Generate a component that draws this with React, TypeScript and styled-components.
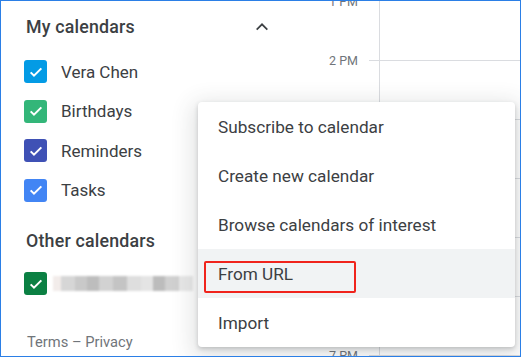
import styled, { createGlobalStyle } from "styled-components"

const GlobalStyle = createGlobalStyle`
  html, body {
    margin: 0;
    padding: 0;
    background: #ffffff;
  }
  body {
    font-family: Roboto, "Liberation Sans", Arial, sans-serif;
  }
`

const Frame = styled.div`
  position: relative;
  width: 521px;
  height: 357px;
  box-sizing: border-box;
  border: 1px solid #2b7fe6;
  display: flex;
  overflow: hidden;
  background: #fff;
`

const Sidebar = styled.div`
  width: 284px;
  flex-shrink: 0;
  display: flex;
  flex-direction: column;
`

const SectionHeader = styled.div<{ $gapTop?: number; $height: number }>`
  height: ${(p) => p.$height}px;
  margin-top: ${(p) => p.$gapTop ?? 0}px;
  display: flex;
  align-items: center;
  justify-content: space-between;
  padding: 0 15px 0 25px;
  font-size: 17.8px;
  font-weight: 500;
  letter-spacing: 0.2px;
  color: #3c4043;
`

const Row = styled.div`
  height: 39.5px;
  display: flex;
  align-items: center;
  padding-left: 23px;
  gap: 14px;
  font-size: 17px;
  color: #3c4043;
`

const Box = styled.div<{ $color: string }>`
  width: 23px;
  height: 23px;
  border-radius: 3px;
  background: ${(p) => p.$color};
  display: flex;
  align-items: center;
  justify-content: center;
  flex-shrink: 0;
`

const OtherRow = styled(Row)`
  margin-top: 6px;
  gap: 6px;
`

const Blurred = styled.div`
  display: flex;
  align-items: center;
  height: 16px;
  filter: blur(1.2px);
`

const BlurPiece = styled.span<{ $w: number; $c: string }>`
  width: ${(p) => p.$w}px;
  height: 15px;
  background: ${(p) => p.$c};
`

const Footer = styled.div`
  margin-top: 30px;
  padding-left: 26px;
  font-size: 14.7px;
  line-height: 16px;
  color: #70757a;
`

const TimeCol = styled.div`
  width: 84px;
  flex-shrink: 0;
  display: flex;
  flex-direction: column;
  margin-top: -29.5px;
`

const TimeLabel = styled.div`
  height: 59px;
  flex-shrink: 0;
  display: flex;
  align-items: center;
  justify-content: flex-end;
  padding-right: 11px;
  font-size: 12.5px;
  color: #70757a;
`

const Tick = styled.div`
  width: 10px;
  flex-shrink: 0;
  display: flex;
  flex-direction: column;
`

const Day = styled.div`
  flex: 1;
  border-left: 1px solid #dadce0;
  display: flex;
  flex-direction: column;
`

const HourCell = styled.div<{ $first?: boolean }>`
  height: 59px;
  flex-shrink: 0;
  box-sizing: border-box;
  border-top: 1px solid ${(p) => (p.$first ? "transparent" : "#dadce0")};
`

const Menu = styled.div`
  position: absolute;
  left: 197px;
  top: 101px;
  width: 317px;
  background: #fff;
  border-radius: 4px;
  box-shadow: 0 2px 4px rgba(60, 64, 67, 0.25), 0 6px 22px 6px rgba(60, 64, 67, 0.14);
  display: flex;
  flex-direction: column;
`

const MenuItem = styled.div<{ $active?: boolean }>`
  position: relative;
  height: 49px;
  display: flex;
  align-items: center;
  padding-left: 20px;
  font-size: 17.2px;
  color: #3c4043;
  background: ${(p) => (p.$active ? "#f1f3f4" : "transparent")};
`

const Highlight = styled.span`
  position: absolute;
  left: 6px;
  top: 12px;
  width: 152px;
  height: 32px;
  box-sizing: border-box;
  border: 2.5px solid #f0241c;
  border-radius: 2px;
`

const Check = () => (
  <svg width="16" height="16" viewBox="0 0 24 24">
    <path d="M4 12.5l5 5L20 6.5" fill="none" stroke="#fff" strokeWidth="3" />
  </svg>
)

const Chevron = () => (
  <svg width="16" height="16" viewBox="0 0 24 24">
    <path d="M4 16l8-8 8 8" fill="none" stroke="#3c4043" strokeWidth="2.6" />
  </svg>
)

const calendars = [
  { name: "Vera Chen", color: "#039be5" },
  { name: "Birthdays", color: "#33b679" },
  { name: "Reminders", color: "#3f51b5" },
  { name: "Tasks", color: "#4285f4" },
]

const blur = [
  { w: 8, c: "#f2ecea" },
  { w: 14, c: "#d6d6d6" },
  { w: 12, c: "#c9c9c9" },
  { w: 12, c: "#bdbdbd" },
  { w: 14, c: "#d2d2d2" },
  { w: 14, c: "#c4c4c4" },
  { w: 14, c: "#dedede" },
  { w: 12, c: "#e4e4e4" },
  { w: 12, c: "#bcbcbc" },
  { w: 14, c: "#d0d0d0" },
  { w: 14, c: "#e8e8e8" },
]

// labels for 3–6 PM sit under the menu and are not visible
const hours = ["1 PM", "2 PM", "", "", "", "", "7 PM"]

const menuItems = [
  "Subscribe to calendar",
  "Create new calendar",
  "Browse calendars of interest",
  "From URL",
  "Import",
]

const App = () => {
  return (
    <>
      <GlobalStyle />
      <Frame>
        <Sidebar>
          <SectionHeader $height={51}>
            My calendars
            <Chevron />
          </SectionHeader>
          {calendars.map((c) => (
            <Row key={c.name}>
              <Box $color={c.color}>
                <Check />
              </Box>
              {c.name}
            </Row>
          ))}
          <SectionHeader $height={36} $gapTop={12}>
            Other calendars
          </SectionHeader>
          <OtherRow>
            <Box $color="#0b8043">
              <Check />
            </Box>
            <Blurred>
              {blur.map((b, i) => (
                <BlurPiece key={i} $w={b.w} $c={b.c} />
              ))}
            </Blurred>
          </OtherRow>
          <Footer>Terms – Privacy</Footer>
        </Sidebar>
        <TimeCol>
          {hours.map((h, i) => (
            <TimeLabel key={i}>{h}</TimeLabel>
          ))}
        </TimeCol>
        <Tick>
          {hours.map((_, i) => (
            <HourCell key={i} $first={i === 0} />
          ))}
        </Tick>
        <Day>
          {hours.map((_, i) => (
            <HourCell key={i} $first={i === 0} />
          ))}
        </Day>
        <Menu>
          {menuItems.map((m) => (
            <MenuItem key={m} $active={m === "From URL"}>
              {m}
              {m === "From URL" && <Highlight />}
            </MenuItem>
          ))}
        </Menu>
      </Frame>
    </>
  )
}

export default App
